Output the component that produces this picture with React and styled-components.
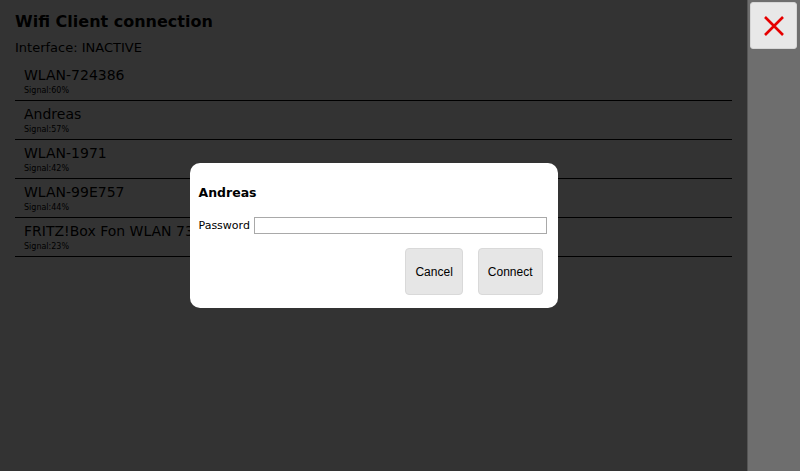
import * as React from "react"
import styled, { createGlobalStyle } from "styled-components"

const GlobalStyle = createGlobalStyle`
  html, body {
    margin: 0;
    padding: 0;
    height: 100%;
    background: #ffffff;
  }
  #root {
    height: 100%;
  }
`

const Page = styled.div`
  display: flex;
  height: 471px;
  font-family: "DejaVu Sans", Verdana, sans-serif;
  color: #000;
`

const Main = styled.main`
  position: relative;
  flex: 1;
  padding: 12px 15px;
  background: #ffffff;
`

const Title = styled.h1`
  margin: 0;
  font-size: 16px;
  line-height: 19px;
  font-weight: bold;
`

const Status = styled.div`
  margin-top: 9px;
  font-size: 13px;
  line-height: 16px;
`

const NetworkList = styled.ul`
  list-style: none;
  margin: 6px 0 0;
  padding: 0;
`

const NetworkItem = styled.li`
  padding: 3px 9px 4px;
  border-bottom: 1px solid #000;
`

const NetworkName = styled.div`
  font-size: 14px;
  line-height: 20px;
`

const Signal = styled.div`
  font-size: 8px;
  line-height: 11px;
`

const Overlay = styled.div`
  position: absolute;
  inset: 0;
  display: flex;
  align-items: center;
  justify-content: center;
  background: rgba(0, 0, 0, 0.8);
`

const Dialog = styled.div`
  width: 368px;
  box-sizing: border-box;
  padding: 22px 11px 13px 9px;
  background: #ffffff;
  border-radius: 10px;
`

const DialogTitle = styled.h3`
  margin: 0;
  font-size: 12.5px;
  line-height: 16px;
  font-weight: bold;
`

const FieldRow = styled.label`
  display: flex;
  align-items: center;
  gap: 4px;
  margin-top: 16px;
  font-size: 11px;
`

const PasswordInput = styled.input`
  flex: 1;
  height: 17px;
  box-sizing: border-box;
  padding: 0 3px;
  border: 1px solid #a9a9a9;
  font-size: 12px;
  outline: none;
`

const ButtonRow = styled.div`
  display: flex;
  justify-content: flex-end;
  gap: 15px;
  margin-top: 14px;
  padding-right: 4px;
`

const DialogButton = styled.button`
  height: 47px;
  padding: 0 9px;
  background: #e6e6e6;
  border: 1px solid #d9d9d9;
  border-radius: 4px;
  font-family: "Liberation Sans", Arial, sans-serif;
  font-size: 12px;
  color: #000;
`

const Sidebar = styled.aside`
  width: 50px;
  padding: 2px 0 0 2px;
  background: #6e6e6e;
  border-left: 1px solid #555555;
`

const CloseButton = styled.button`
  display: flex;
  align-items: center;
  justify-content: center;
  width: 47px;
  height: 47px;
  padding: 0;
  background: #e8e8e8;
  border: 1px solid #d6d6d6;
  border-radius: 3px;
`

const networks = [
  { name: "WLAN-724386", signal: 60 },
  { name: "Andreas", signal: 57 },
  { name: "WLAN-1971", signal: 42 },
  { name: "WLAN-99E757", signal: 44 },
  { name: "FRITZ!Box Fon WLAN 7360", signal: 23 },
]

export default function App() {
  return (
    <>
      <GlobalStyle />
      <Page>
        <Main>
          <Title>Wifi Client connection</Title>
          <Status>Interface: INACTIVE</Status>
          <NetworkList>
            {networks.map((n) => (
              <NetworkItem key={n.name}>
                <NetworkName>{n.name}</NetworkName>
                <Signal>Signal:{n.signal}%</Signal>
              </NetworkItem>
            ))}
          </NetworkList>
          <Overlay>
            <Dialog>
              <DialogTitle>Andreas</DialogTitle>
              <FieldRow>
                Password
                <PasswordInput type="password" />
              </FieldRow>
              <ButtonRow>
                <DialogButton>Cancel</DialogButton>
                <DialogButton>Connect</DialogButton>
              </ButtonRow>
            </Dialog>
          </Overlay>
        </Main>
        <Sidebar>
          <CloseButton aria-label="Close">
            <svg width="22" height="22" viewBox="0 0 22 22">
              <path
                d="M2 2 L20 20 M20 2 L2 20"
                stroke="#e60000"
                strokeWidth="2.6"
                fill="none"
              />
            </svg>
          </CloseButton>
        </Sidebar>
      </Page>
    </>
  )
}
